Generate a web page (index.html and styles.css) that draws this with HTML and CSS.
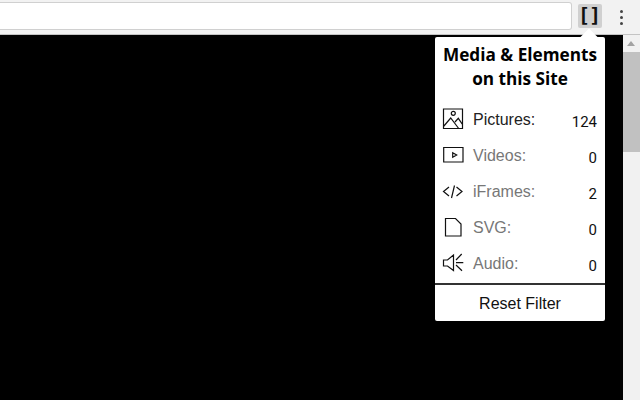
FILE: index.html
```html
<!DOCTYPE html>
<html lang="en">
<head>
  <meta charset="UTF-8"/>
  <title>Media &amp; Elements</title>
  <link rel="stylesheet" href="styles.css">
</head>
<body>
  <div class="toolbar">
    <div class="omnibox"></div>
    <div class="ext-btn"><span>[</span><span>]</span></div>
    <div class="menu-btn"><i></i><i></i><i></i></div>
  </div>
  <div class="main">
    <div class="page"></div>
    <div class="scrollbar">
      <div class="arrow"></div>
      <div class="thumb"></div>
    </div>
  </div>

  <div class="popup">
    <div class="notch"></div>
    <h1>Media &amp; Elements<br>on this Site</h1>
    <ul class="rows">
      <li class="row">
        <svg class="icon" viewBox="0 0 22 22"><path d="M1.500 1h19v19.500h-19zM1.500 18.500l7.200-8.500 8 10.500M13 14l3.300-3.700 4.200 6.200"/><circle cx="11.300" cy="5.300" r="2"/></svg>
        <span class="name">Pictures:</span><span class="num">124</span>
      </li>
      <li class="row off">
        <svg class="icon" viewBox="0 0 22 22"><path d="M1.700 3.500h19.300v14.500h-19.300zM10.700 8.700l4 2.300-4 2.300z"/></svg>
        <span class="name">Videos:</span><span class="num">0</span>
      </li>
      <li class="row off">
        <svg class="icon" viewBox="0 0 22 22"><path d="M7 7l-5.500 4.500 5.500 4.500M14.500 7l5.500 4.500-5.500 4.500M12.500 5.500l-3 12.500"/></svg>
        <span class="name">iFrames:</span><span class="num">2</span>
      </li>
      <li class="row off">
        <svg class="icon" viewBox="0 0 22 22"><path d="M3.500 2.500h10l5.500 5.500v12h-15.500z"/></svg>
        <span class="name">SVG:</span><span class="num">0</span>
      </li>
      <li class="row off">
        <svg class="icon" viewBox="0 0 22 22"><path d="M1.500 8h4l6-5v15.500l-6-4.500h-4zM14 8l5.700-6M14 10.700h7.300M14 13l6 5.700"/></svg>
        <span class="name">Audio:</span><span class="num">0</span>
      </li>
    </ul>
    <div class="reset">Reset Filter</div>
  </div>
</body>
</html>
```

FILE: styles.css
```css
* { box-sizing: border-box; margin: 0; padding: 0 }
html, body { height: 100%; overflow: hidden }
body {
  display: flex;
  flex-direction: column;
  font-family: "Liberation Sans", Arial, sans-serif;
  background: #000;
}
.toolbar {
  height: 35px;
  flex: none;
  display: flex;
  align-items: flex-start;
  background: #f2f2f2;
  border-bottom: 1px solid #c4c4c4;
}
.omnibox {
  width: 572px;
  height: 28px;
  margin-top: 2px;
  background: #fff;
  border: 1px solid #d0d0d0;
  border-left: 0;
  border-radius: 0 3px 3px 0;
}
.ext-btn {
  width: 24px;
  height: 24px;
  margin: 4px 0 0 6px;
  padding-right: 2px;
  display: flex;
  justify-content: center;
  background: #d0d0d0;
  border-radius: 2px;
  font: bold 20px/22px "DejaVu Sans Mono", monospace;
  color: #111;
}
.ext-btn span {
  width: 11px;
  flex: none;
}
.menu-btn {
  display: flex;
  flex-direction: column;
  gap: 3px;
  margin: 10px 0 0 18px;
}
.menu-btn i {
  width: 3px;
  height: 3px;
  border-radius: 50%;
  background: #444;
}
.main {
  flex: 1;
  display: flex;
}
.page { flex: 1; background: #000 }
.scrollbar {
  width: 17px;
  background: #f1f1f1;
}
.arrow {
  height: 17px;
  position: relative;
}
.arrow::after {
  content: "";
  position: absolute;
  left: 4px;
  top: 6px;
  border: 4px solid transparent;
  border-top: 0;
  border-bottom: 5px solid #a3a3a3;
}
.thumb {
  height: 100px;
  background: #c1c1c1;
}
.popup {
  position: absolute;
  left: 435px;
  top: 37px;
  width: 170px;
  height: 284px;
  background: #fff;
  border-radius: 2px;
  display: flex;
  flex-direction: column;
}
.notch {
  position: absolute;
  left: 148px;
  top: -6px;
  width: 12px;
  height: 12px;
  background: #fff;
  transform: rotate(45deg);
}
h1 {
  position: relative;
  margin-top: 6px;
  font: bold 17.2px/24px "Open Sans", sans-serif;
  text-align: center;
  color: #000;
}
.rows {
  list-style: none;
  margin-top: 11px;
  flex: 1;
}
.row {
  height: 36px;
  display: flex;
  align-items: center;
  padding: 0 8px 0 7px;
  font-size: 16px;
}
.icon {
  width: 22px;
  height: 22px;
  flex: none;
  margin: 0 9px 2px 0;
  fill: none;
  stroke: #111;
  stroke-width: 1.2;
}
.name { flex: 1; color: #222 }
.off .name { color: #777 }
.num {
  font: 15px Roboto, sans-serif;
  color: #111;
  position: relative;
  top: 2px;
}
.reset {
  height: 38px;
  border-top: 2px solid #333;
  font-size: 16px;
  line-height: 38px;
  text-align: center;
  color: #111;
}
```
